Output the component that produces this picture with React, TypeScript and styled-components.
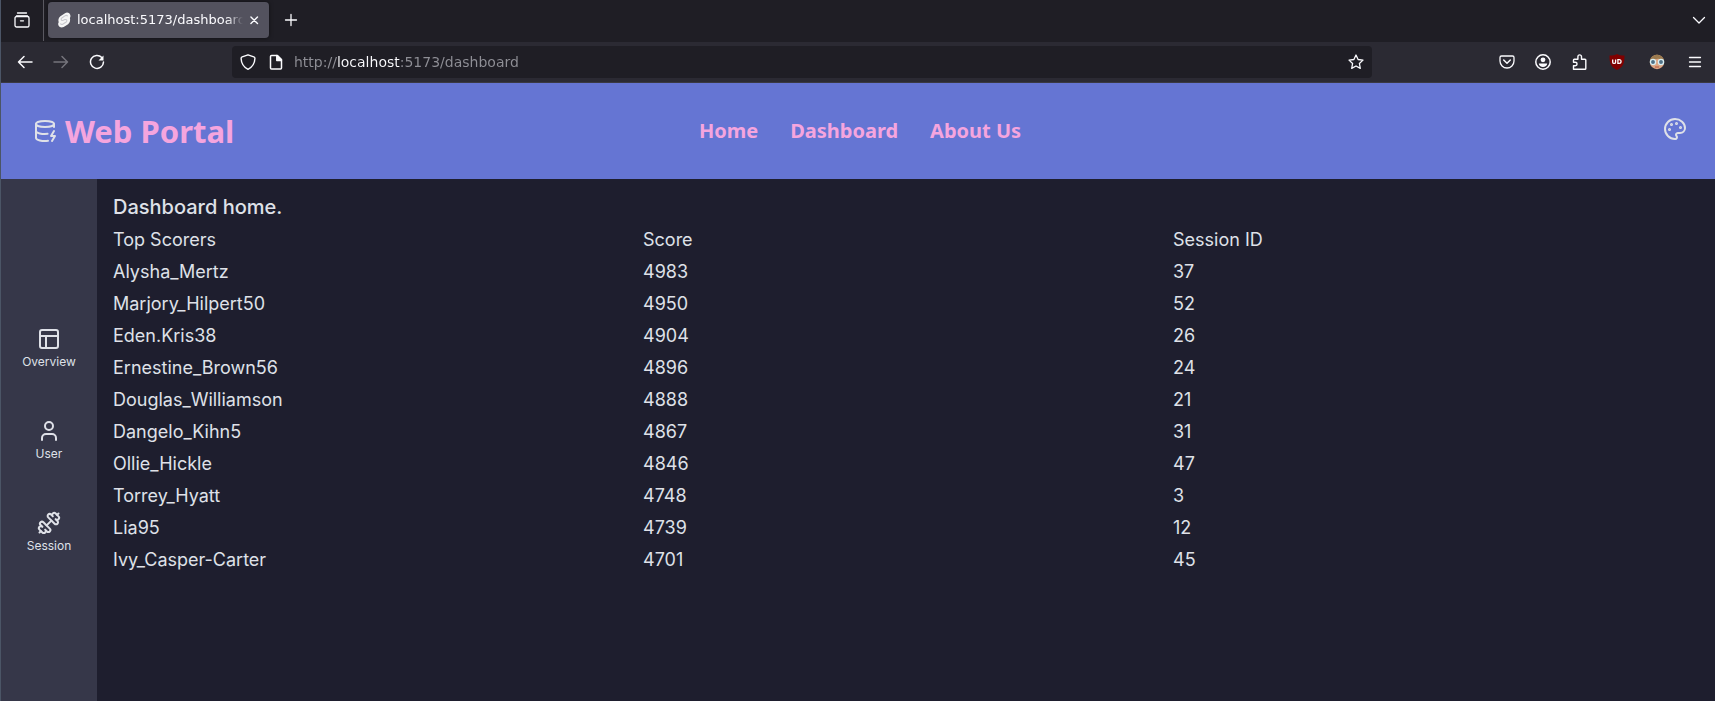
import React from "react";
import styled, { createGlobalStyle } from "styled-components";
import { DatabaseZap, Dumbbell, Palette, PanelsTopLeft, User } from "lucide-react";

const GlobalStyle = createGlobalStyle`
  *, *::before, *::after { box-sizing: border-box; }
  body {
    margin: 0;
    background: #1e1e2e;
    color: #dfe1e8;
    font-family: Inter, "Liberation Sans", sans-serif;
  }
  button { font: inherit; color: inherit; background: none; border: 0; padding: 0; cursor: pointer; }
  a { color: inherit; text-decoration: none; }
  h1, h2, p, ul { margin: 0; padding: 0; }
  svg { display: block; flex: none; }
`;

const Window = styled.div`
  min-height: 100vh;
  display: flex;
  flex-direction: column;
  border-left: 1px solid #4b5566;
`;

const TabStrip = styled.div`
  height: 42px;
  padding-bottom: 2px;
  display: flex;
  align-items: center;
  background: #1f1e25;
  color: #fbfbfe;
  font: 13px/16px "DejaVu Sans", sans-serif;
`;

const ChromeButton = styled.button<{ $width?: number; $dim?: boolean }>`
  width: ${(p) => p.$width ?? 36}px;
  height: 32px;
  display: flex;
  align-items: center;
  justify-content: center;
  color: ${(p) => (p.$dim ? "#75747c" : "#fbfbfe")};
  flex: none;
`;

const StripDivider = styled.div`
  width: 1px;
  height: 42px;
  margin-right: 4px;
  background: #5a5961;
`;

const Tab = styled.div`
  width: 221px;
  height: 36px;
  padding: 0 4px 0 8px;
  display: flex;
  align-items: center;
  background: #53525e;
  border-radius: 4px;
  box-shadow: 0 0 4px rgba(0, 0, 0, 0.5);
`;

const TabTitle = styled.span`
  flex: 1;
  min-width: 0;
  overflow: hidden;
  white-space: nowrap;
  padding-left: 5px;
  mask-image: linear-gradient(to left, transparent, #000 16px);
`;

const Spacer = styled.div`
  flex: 1;
`;

const Toolbar = styled.div`
  height: 41px;
  padding-right: 2px;
  display: flex;
  align-items: center;
  background: #2b2a33;
  border-bottom: 1px solid #3a3942;
`;

const NavButtons = styled.div`
  display: flex;
  padding-left: 6px;
  flex: 0 1 231px;
`;

const UrlBar = styled.label`
  flex: 0 1 1140px;
  height: 32px;
  padding: 0 5px 0 3px;
  display: flex;
  align-items: center;
  gap: 2px;
  border-radius: 4px;
  background: #1f1e25;
  color: #fbfbfe;
`;

const UrlIcon = styled.span`
  width: 26px;
  display: flex;
  justify-content: center;
`;

const UrlInput = styled.input`
  flex: 1;
  min-width: 0;
  height: 24px;
  border: 0;
  padding: 0 0 0 3px;
  outline: none;
  font: 14px/20px "DejaVu Sans", sans-serif;
  color: #8f8f96;
  background: linear-gradient(to right, #8f8f96 46px, #fbfbfe 46px, #fbfbfe 109px, #8f8f96 109px);
  background-clip: text;
  -webkit-text-fill-color: transparent;
`;

const Header = styled.header`
  height: 96px;
  padding: 0 28px 0 32px;
  display: grid;
  grid-template-columns: 1fr auto 1fr;
  align-items: center;
  background: #6575d3;
  color: #f5a5de;
  font-family: "Noto Sans", "Open Sans", sans-serif;
  font-weight: 700;
`;

const Brand = styled.a`
  display: flex;
  align-items: center;
  gap: 8px;
  font-size: 31px;
  line-height: 40px;
  svg { color: #dfe1e8; }
`;

const Nav = styled.nav`
  display: flex;
  gap: 32px;
  font-size: 20px;
  line-height: 28px;
`;

const ThemeButton = styled.button`
  justify-self: end;
  height: 28px;
  display: flex;
  align-items: flex-start;
  justify-content: center;
  color: #dfe1e8;
`;

const Body = styled.div`
  flex: 1;
  display: flex;
`;

const Sidebar = styled.nav`
  width: 96px;
  flex: none;
  display: flex;
  flex-direction: column;
  justify-content: center;
  background: #363749;
`;

const SideLink = styled.a`
  height: 92px;
  display: flex;
  flex-direction: column;
  align-items: center;
  justify-content: center;
  gap: 3px;
  font-size: 12px;
  line-height: 16px;
`;

const Main = styled.main`
  flex: 1;
  min-width: 0;
  padding: 12px 12px 16px 16px;
`;

const Title = styled.h1`
  font-size: 20px;
  line-height: 33px;
  font-weight: 500;
`;

const ScoreTable = styled.table`
  width: 100%;
  table-layout: fixed;
  border-collapse: collapse;
  font-size: 18px;
  line-height: 32px;
  th, td { padding: 0; text-align: left; font-weight: 400; }
`;

const scores: [string, number, number][] = [
  ["Alysha_Mertz", 4983, 37],
  ["Marjory_Hilpert50", 4950, 52],
  ["Eden.Kris38", 4904, 26],
  ["Ernestine_Brown56", 4896, 24],
  ["Douglas_Williamson", 4888, 21],
  ["Dangelo_Kihn5", 4867, 31],
  ["Ollie_Hickle", 4846, 47],
  ["Torrey_Hyatt", 4748, 3],
  ["Lia95", 4739, 12],
  ["Ivy_Casper-Carter", 4701, 45],
];

const sideLinks = [
  { label: "Overview", Icon: PanelsTopLeft },
  { label: "User", Icon: User },
  { label: "Session", Icon: Dumbbell },
];

function Glyph({ children, size = 16 }: { children: React.ReactNode; size?: number }) {
  return (
    <svg width={size} height={size} viewBox="0 0 16 16" fill="none" stroke="currentColor" strokeWidth="1.3" strokeLinecap="round" strokeLinejoin="round" aria-hidden="true">
      {children}
    </svg>
  );
}

function BrowserTabs() {
  return (
    <TabStrip>
      <ChromeButton $width={42} aria-label="Recent browsing">
        <Glyph>
          <path d="M3.500 1h9M2.500 4h11" />
          <rect x="1" y="4.500" width="14" height="10.500" rx="1.600" />
          <path d="M6.500 8.800h3" />
        </Glyph>
      </ChromeButton>
      <StripDivider />
      <Tab>
        <svg width="16" height="16" viewBox="0 0 16 16" aria-hidden="true">
          <path d="M9 1.2c2-1.2 4.400-.5 5.200 1.500.5 1.200.3 2.400-.3 3.300.5 2 .3 4.600-1.800 6.200L7.700 15c-2 1-4.300.5-5.200-1.500-.5-1.200-.4-2.300.2-3.200-.7-2.300-.2-4.700 1.700-6z" fill="#f6f6f6" />
          <path d="M11.700 4.300c-.7-1-1.900-1-2.800-.4L5.800 6c-1.500 1.200-.3 3 1.500 2.300l1.500-.7c1.800-.6 2.900 1.200 1.400 2.400l-3.100 2c-1 .6-2.200.4-2.800-.5" fill="none" stroke="#c9c9ce" strokeWidth="1.100" />
        </svg>
        <TabTitle>localhost:5173/dashboard</TabTitle>
        <ChromeButton $width={22} aria-label="Close tab">
          <Glyph size={14}><path d="M4.500 4.500l7.500 7.500M12 4.500L4.500 12" strokeWidth="1.600" /></Glyph>
        </ChromeButton>
      </Tab>
      <ChromeButton $width={44} aria-label="New tab">
        <Glyph><path d="M8 2.500v11M2.500 8h11" /></Glyph>
      </ChromeButton>
      <Spacer />
      <ChromeButton $width={32} aria-label="List all tabs">
        <Glyph><path d="M2.500 5.500L8 11l5.500-5.500" /></Glyph>
      </ChromeButton>
    </TabStrip>
  );
}

function BrowserToolbar() {
  return (
    <Toolbar>
      <NavButtons>
        <ChromeButton aria-label="Back">
          <Glyph><path d="M15 8H1.500M7 2.500L1.500 8 7 13.500" strokeWidth="1.500" /></Glyph>
        </ChromeButton>
        <ChromeButton $dim aria-label="Forward">
          <Glyph><path d="M1 8h13.500M9 2.500L14.500 8 9 13.500" strokeWidth="1.500" /></Glyph>
        </ChromeButton>
        <ChromeButton aria-label="Reload">
          <Glyph>
            <path d="M12.800 3.500A6.500 6.500 0 1 0 14.500 8" strokeWidth="1.500" />
            <path d="M14.500 1.500v5h-5z" fill="currentColor" stroke="none" />
          </Glyph>
        </ChromeButton>
      </NavButtons>
      <UrlBar>
        <UrlIcon>
          <Glyph><path d="M8 .8l5.800 2.100c.8.300 1.200.8 1.100 1.600C14.700 9.500 12.500 13 8 15.300 3.500 13 1.300 9.500 1.100 4.500c0-.8.300-1.300 1.100-1.600z" strokeWidth="1.400" /></Glyph>
        </UrlIcon>
        <UrlIcon>
          <Glyph>
            <path d="M3.500 1.500h6l4 4v8.500a1 1 0 0 1-1 1h-9a1 1 0 0 1-1-1V2.500a1 1 0 0 1 1-1z" strokeWidth="1.500" />
            <path d="M8.700 1.500v5h4.800z" fill="currentColor" />
          </Glyph>
        </UrlIcon>
        <UrlInput aria-label="Address" defaultValue="http://localhost:5173/dashboard" />
        <ChromeButton $width={22} aria-label="Bookmark this page">
          <Glyph><path d="M8 1l2.100 4.500 4.900.6-3.600 3.400.9 4.900L8 12l-4.300 2.400.9-4.900L1 6.100l4.900-.6z" /></Glyph>
        </ChromeButton>
      </UrlBar>
      <Spacer />
      <ChromeButton aria-label="Save to Pocket">
        <Glyph>
          <path d="M2.500 2h11a1.500 1.500 0 0 1 1.500 1.500V7A7 7 0 0 1 1 7V3.500A1.500 1.500 0 0 1 2.500 2z" />
          <path d="M4.700 6L8 9.200 11.300 6" strokeWidth="1.500" />
        </Glyph>
      </ChromeButton>
      <ChromeButton aria-label="Account">
        <Glyph>
          <circle cx="8" cy="8" r="7.200" strokeWidth="1.500" />
          <circle cx="8" cy="5.800" r="2.400" fill="currentColor" stroke="none" />
          <path d="M3.800 9.500h8.400c0 2-2 3.500-4.200 3.500s-4.200-1.500-4.200-3.500z" fill="currentColor" stroke="none" />
        </Glyph>
      </ChromeButton>
      <ChromeButton aria-label="Extensions">
        <Glyph>
          <path d="M2.500 15.200H14a.8.8 0 0 0 .8-.8V6a.8.8 0 0 0-.8-.8h-3.500V2.700a1.800 1.800 0 0 0-3.600 0v2.500H3.300a.8.8 0 0 0-.8.800v2.200h1.800a1.700 1.700 0 0 1 0 3.500H2.500z" strokeWidth="1.400" />
        </Glyph>
      </ChromeButton>
      <ChromeButton $width={40} aria-label="uBlock Origin">
        <svg width="16" height="16" viewBox="0 0 16 16" aria-hidden="true">
          <path d="M8 0c2 1.300 4 1.600 7.500 1.600C15.500 9 14.500 13 8 16 1.500 13 .5 9 .5 1.600 4 1.600 6 1.300 8 0z" fill="#800000" />
          <path d="M3.700 5.500v2.700c0 1.600 2.900 1.600 2.900 0V5.500M8.900 5.600v3.700h1.200c2.600 0 2.600-3.700 0-3.700z" fill="none" stroke="#fff" strokeWidth="1.300" />
        </svg>
      </ChromeButton>
      <ChromeButton $width={40} aria-label="User agent switcher">
        <svg width="16" height="16" viewBox="0 0 16 16" aria-hidden="true">
          <circle cx="8" cy="8" r="7.200" fill="#dda582" />
          <path d="M1 7C1.500-1.500 14.500-1.500 15 7 11 4 8 4 1 7z" fill="#9b7a4f" />
          <path d="M6 13h4" stroke="#b5563f" />
          <circle cx="4" cy="8" r="2.600" fill="#4f7187" stroke="#d9eef2" strokeWidth="1.300" />
          <circle cx="12" cy="8" r="2.600" fill="#4f7187" stroke="#d9eef2" strokeWidth="1.300" />
        </svg>
      </ChromeButton>
      <ChromeButton aria-label="Application menu">
        <Glyph><path d="M2.500 3.500h11M2.500 8h11M2.500 12.500h11" /></Glyph>
      </ChromeButton>
    </Toolbar>
  );
}

export default function App() {
  return (
    <Window>
      <GlobalStyle />
      <BrowserTabs />
      <BrowserToolbar />
      <Header>
        <Brand href="#home">
          <DatabaseZap size={24} />
          Web Portal
        </Brand>
        <Nav aria-label="Main">
          <a href="#home">Home</a>
          <a href="#dashboard">Dashboard</a>
          <a href="#about">About Us</a>
        </Nav>
        <ThemeButton aria-label="Theme">
          <Palette size={24} />
        </ThemeButton>
      </Header>
      <Body>
        <Sidebar aria-label="Dashboard sections">
          {sideLinks.map(({ label, Icon }) => (
            <SideLink key={label} href={`#${label.toLowerCase()}`}>
              <Icon size={24} />
              {label}
            </SideLink>
          ))}
        </Sidebar>
        <Main>
          <Title>Dashboard home.</Title>
          <ScoreTable>
            <thead>
              <tr>
                <th scope="col">Top Scorers</th>
                <th scope="col">Score</th>
                <th scope="col">Session ID</th>
              </tr>
            </thead>
            <tbody>
              {scores.map(([name, score, session]) => (
                <tr key={name}>
                  <td>{name}</td>
                  <td>{score}</td>
                  <td>{session}</td>
                </tr>
              ))}
            </tbody>
          </ScoreTable>
        </Main>
      </Body>
    </Window>
  );
}
